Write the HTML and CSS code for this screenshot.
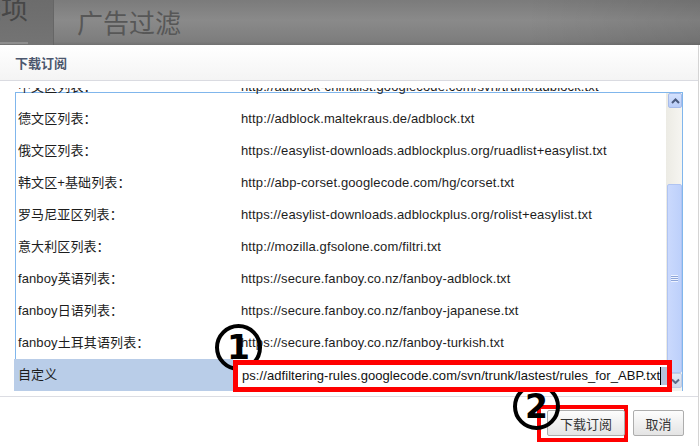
FILE: index.html
```html
<!DOCTYPE html>
<html lang="zh-CN">
<head>
<meta charset="utf-8">
<title>下载订阅</title>
<link rel="stylesheet" href="styles.css">
</head>
<body>
<header class="topbar">
  <div class="tab"><span class="tab-text">选项</span><span class="tab-line"></span></div>
  <div class="top-title">广告过滤</div>
</header>
<section class="dialog">
  <div class="dialog-head">下载订阅</div>
  <div class="viewport">
    <div class="frame">
      <div class="rows">
        <div class="row row-first"><span class="name">中文区列表：</span><span class="url">http://adblock-chinalist.googlecode.com/svn/trunk/adblock.txt</span></div>
        <div class="row"><span class="name">德文区列表：</span><span class="url">http://adblock.maltekraus.de/adblock.txt</span></div>
        <div class="row"><span class="name">俄文区列表：</span><span class="url">https://easylist-downloads.adblockplus.org/ruadlist+easylist.txt</span></div>
        <div class="row"><span class="name">韩文区+基础列表：</span><span class="url">http://abp-corset.googlecode.com/hg/corset.txt</span></div>
        <div class="row"><span class="name">罗马尼亚区列表：</span><span class="url">https://easylist-downloads.adblockplus.org/rolist+easylist.txt</span></div>
        <div class="row"><span class="name">意大利区列表：</span><span class="url">http://mozilla.gfsolone.com/filtri.txt</span></div>
        <div class="row"><span class="name">fanboy英语列表：</span><span class="url">https://secure.fanboy.co.nz/fanboy-adblock.txt</span></div>
        <div class="row"><span class="name">fanboy日语列表：</span><span class="url">https://secure.fanboy.co.nz/fanboy-japanese.txt</span></div>
        <div class="row"><span class="name">fanboy土耳其语列表：</span><span class="url">https://secure.fanboy.co.nz/fanboy-turkish.txt</span></div>
        <div class="row row-custom">
          <span class="name">自定义</span>
          <div class="custom-input"><span class="value">ps://adfiltering-rules.googlecode.com/svn/trunk/lastest/rules_for_ABP.txt</span><span class="caret"></span><span class="sel"></span></div>
        </div>
      </div>
      <div class="scrollbar">
        <div class="sb-btn sb-up"><svg width="9" height="6" viewBox="0 0 9 6"><polyline points="1,5 4.5,1.5 8,5" fill="none" stroke="#4a5a7e" stroke-width="2"/></svg></div>
        <div class="sb-space"></div>
        <div class="sb-thumb"><span class="grip"></span></div>
        <div class="sb-btn sb-down"><svg width="9" height="6" viewBox="0 0 9 6"><polyline points="1,1.5 4.5,5 8,1.5" fill="none" stroke="#5d6a86" stroke-width="2"/></svg></div>
      </div>
    </div>
  </div>
  <div class="dialog-foot">
    <div class="hl"><button class="btn">下载订阅</button></div>
    <button class="btn btn-cancel">取消</button>
  </div>
  <span class="mark mark-1">1</span>
  <span class="mark mark-2">2</span>
</section>
</body>
</html>
```
FILE: styles.css
```css
* { box-sizing: border-box; }
html, body { margin: 0; padding: 0; }
body {
  width: 700px;
  height: 446px;
  overflow: hidden;
  background: #fff;
  font-family: "Liberation Sans", "Noto Sans CJK SC", sans-serif;
  font-size: 13px;
  color: #1d1d1d;
}

.topbar {
  height: 45px;
  display: flex;
  background:
    linear-gradient(to right, rgba(0,0,0,0) 75%, rgba(0,0,0,0.09)),
    linear-gradient(to bottom, #7b7b7b, #8a8a8a 45%, #7d7d7d 92%, #717171);
}
.tab {
  width: 54px;
  display: flex;
  flex-direction: column;
  justify-content: space-between;
  overflow: hidden;
  background: linear-gradient(to bottom, #6c6c6c, #747474);
  border-right: 1px solid #666;
}
.tab-text {
  font-family: "Noto Sans CJK SC", sans-serif;
  font-size: 27px;
  line-height: 27px;
  margin-top: -6px;
  margin-left: -26px;
  color: #474747;
  white-space: nowrap;
}
.tab-line {
  width: 28px;
  height: 2px;
  margin-bottom: 1px;
  background: #8e8e8e;
}
.top-title {
  font-family: "Noto Sans CJK SC", sans-serif;
  font-size: 26px;
  line-height: 43px;
  padding-left: 23px;
  color: #575757;
}

.dialog {
  position: relative;
  width: 699px;
  height: 401px;
  border-right: 1px solid #d4d4d4;
  background: #fff;
}
.dialog-head {
  height: 36px;
  padding-left: 15px;
  border-bottom: 1px solid #dadbe1;
  background: linear-gradient(#ffffff, #f4f4f4);
  line-height: 36px;
  font-family: "Noto Sans CJK SC", sans-serif;
  font-weight: bold;
  font-size: 13px;
  color: #4c576e;
}

.viewport {
  height: 309px;
  margin-top: 7px;
  overflow: hidden;
  padding: 4px 15px 0 15px;
  border-bottom: 1px solid #dcdde3;
}
.frame {
  display: flex;
  height: 299px;
  border: 1px solid #80b6ec;
  border-bottom: 0;
}
.rows {
  flex: 1;
  min-width: 0;
}
.row {
  display: flex;
  height: 32px;
  line-height: 32px;
  white-space: nowrap;
}
.row-first { margin-top: -22px; }
.name {
  flex: none;
  width: 225px;
  padding-left: 2px;
  letter-spacing: 0.1px;
}
.url { letter-spacing: 0.13px; }
.row-custom .name {
  width: 219px;
  margin-left: -2px;
  padding-left: 4px;
  background: #b9cde8;
}
.custom-input {
  position: relative;
  z-index: 1;
  flex: none;
  display: flex;
  align-items: center;
  width: 439px;
  height: 32px;
  margin-top: 1px;
  padding-left: 4px;
  border: 5px solid #ff0000;
  background: #fff;
  line-height: 22px;
  overflow: hidden;
}
.value { color: #111; letter-spacing: 0.07px; }
.caret {
  flex: none;
  width: 1px;
  height: 18px;
  background: #000;
}
.sel {
  flex: none;
  width: 7px;
  height: 18px;
  background: #b4c2da;
}

.scrollbar {
  flex: none;
  width: 16px;
  display: flex;
  flex-direction: column;
  background: linear-gradient(to right, #ecebe4, #f6f5f1);
}
.sb-btn {
  display: flex;
  align-items: center;
  justify-content: center;
  height: 15px;
  margin-left: 2px;
  border-radius: 2px;
}
.sb-up {
  border: 1px solid #a6bbea;
  background: linear-gradient(#d4e1fd, #b9cdf8);
}
.sb-space { height: 76px; }
.sb-thumb {
  display: flex;
  align-items: center;
  justify-content: center;
  height: 189px;
  margin-left: 1px;
  border: 1px solid #b0c4f2;
  border-radius: 2px;
  background: linear-gradient(to right, #cad9fd, #bdd0fb);
}
.grip {
  width: 7px;
  height: 7px;
  background: repeating-linear-gradient(to bottom, #eef3ff 0 1px, #8ea6d9 1px 2px);
}
.sb-down {
  border: 1px solid #c2cbe0;
  background: linear-gradient(#e3e8f3, #cfd8ea);
}

.dialog-foot {
  display: flex;
  justify-content: flex-end;
  align-items: flex-start;
  gap: 5px;
  padding: 8px 14px 0 0;
}
.hl {
  display: flex;
  padding: 1px 0 2px 6px;
  border: 4px solid #ff0000;
}
.btn {
  width: 78px;
  height: 26px;
  margin: 0 -1px 0 0;
  padding: 0;
  border: 1px solid #adadad;
  border-radius: 2px;
  background: linear-gradient(#fdfdfd, #e4e4e4);
  font-family: "Noto Sans CJK SC", sans-serif;
  font-size: 13px;
  color: #333;
}
.btn-cancel {
  width: 51px;
  margin: 5px 0 0 0;
}

.mark {
  position: absolute;
  width: 47px;
  height: 47px;
  border: 4px solid #000;
  border-radius: 50%;
  font-family: "DejaVu Sans", sans-serif;
  font-weight: bold;
  font-size: 33px;
  line-height: 39px;
  text-align: center;
  color: #000;
}
.mark-1 { left: 215px; top: 279px; }
.mark-2 { left: 513px; top: 338px; }
```
